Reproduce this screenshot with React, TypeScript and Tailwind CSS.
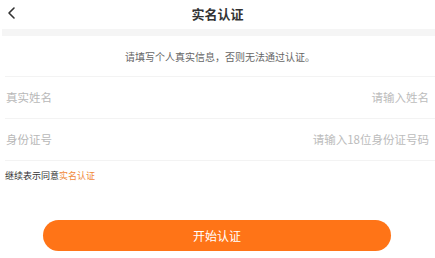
import React from "react";

const font = {
  fontFamily: '"Noto Sans CJK SC", "Noto Sans", sans-serif',
};

const Row = ({ label, placeholder }: { label: string; placeholder: string }) => (
  <div className="ml-[5px] flex h-[42px] items-center justify-between border-b border-[#f3f3f3] pr-[6px]">
    <span className="pl-[1px] text-[11.5px] text-[#b8b8b8]">{label}</span>
    <input
      className="w-[200px] bg-transparent text-right text-[11.5px] text-[#333] outline-none placeholder:text-[#bcbcbc]"
      placeholder={placeholder}
    />
  </div>
);

export default function App() {
  return (
    <div className="h-[258px] w-[435px] overflow-hidden bg-white" style={font}>
      <div className="relative flex h-[29px] items-center justify-center pb-[3px]">
        <button className="absolute left-[6px] top-[6px] text-[#333]">
          <svg width="12" height="14" viewBox="0 0 12 14" fill="none">
            <path d="M8 2 L3 7 L8 12" stroke="#333" strokeWidth="1.6" strokeLinecap="round" strokeLinejoin="round" />
          </svg>
        </button>
        <h1 className="text-[13px] font-bold leading-none text-[#333]">实名认证</h1>
      </div>
      <div className="ml-[2px] h-[7px] bg-[#f5f5f5]" />
      <div className="ml-[5px] flex h-[41px] items-center justify-center border-b border-[#f3f3f3]">
        <p className="text-[10px] text-[#666]">请填写个人真实信息，否则无法通过认证。</p>
      </div>
      <Row label="真实姓名" placeholder="请输入姓名" />
      <Row label="身份证号" placeholder="请输入18位身份证号码" />
      <p className="mt-[9px] pl-[5px] text-[9px] leading-[12px] text-[#333]">
        继续表示同意<span className="text-[#f0893a]">实名认证</span>
      </p>
      <div className="mt-[38px] flex justify-center pr-[1px]">
        <button className="h-[31px] w-[348px] rounded-full bg-[#ff7417] text-[12px] text-white">
          开始认证
        </button>
      </div>
    </div>
  );
}
